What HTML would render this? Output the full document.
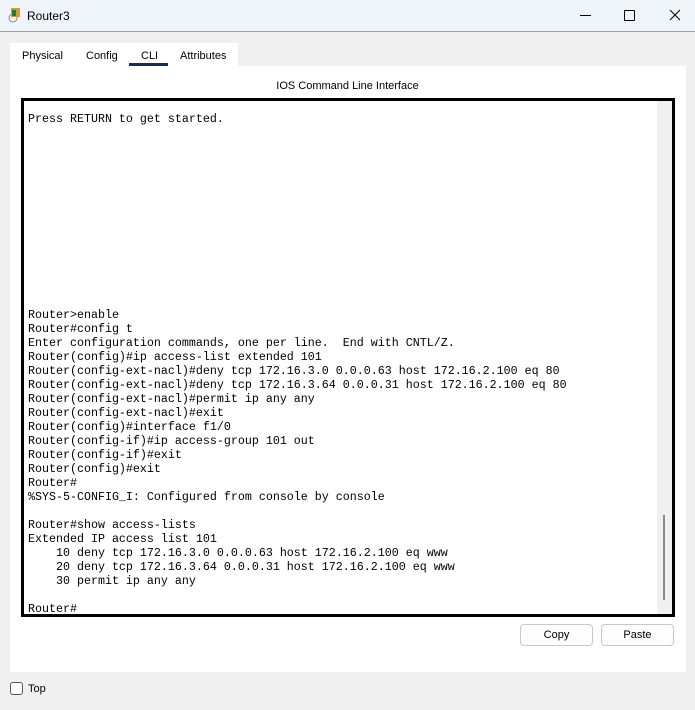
<!DOCTYPE html>
<html><head><style>
body{margin:0;width:695px;height:710px;background:#f0f0f0;font-family:"Liberation Sans",sans-serif;position:relative;overflow:hidden}
.tb{position:absolute;left:0;top:0;width:695px;height:31px;background:#eff4f9;border-bottom:1px solid #a0a0a0}
.tb .t{position:absolute;left:27px;top:9px;font-size:12px;color:#000}
.tabs{position:absolute;left:10px;top:43px;width:228px;height:23px;background:#fff}
.tab{position:absolute;top:6px;font-size:11px;color:#000}
.panel{position:absolute;left:10px;top:66px;width:676px;height:606px;background:#fff}
.hdr{position:absolute;left:0;width:695px;top:79px;text-align:center;font-size:11px}
.term{position:absolute;left:21px;top:98px;width:648px;height:513px;border:3px solid #000;background:#fff;overflow:hidden}
.sb{position:absolute;right:0;top:0;width:15px;height:100%;background:#f0f0f0}
.th{position:absolute;left:6px;top:414px;width:2px;height:85px;background:#8a8a8a}
pre{margin:0;position:absolute;left:4px;top:11px;font-family:"Liberation Mono",monospace;font-size:11.67px;line-height:14px;color:#000}
.btn{position:absolute;top:624px;width:71px;height:20px;border:1px solid #c8c8c8;border-radius:4px;background:#fdfdfd;font-size:11px;text-align:center;line-height:20px}
</style></head><body>
<div class="tb">
<svg style="position:absolute;left:6px;top:7px" width="16" height="16"><circle cx="7" cy="11" r="4" fill="none" stroke="#888"/><rect x="5" y="1" width="9" height="9" fill="#c8a040"/><rect x="6" y="3" width="4" height="6" fill="#2a7a2a"/></svg>
<span class="t">Router3</span>
<div style="position:absolute;left:580px;top:15px;width:11px;height:1px;background:#000"></div>
<div style="position:absolute;left:624px;top:10px;width:9px;height:9px;border:1px solid #000;border-radius:1px"></div>
<svg style="position:absolute;left:669px;top:9px" width="12" height="12"><path d="M1 1L11 11M11 1L1 11" stroke="#000" stroke-width="1"/></svg>
</div>
<div class="tabs">
<span class="tab" style="left:12px;top:7px">Physical</span>
<span class="tab" style="left:76px;top:7px">Config</span>
<span class="tab" style="left:131px;top:7px">CLI</span>
<div style="position:absolute;left:119px;top:20px;width:39px;height:3px;background:#1a2d4a"></div>
<span class="tab" style="left:170px;top:7px">Attributes</span>
</div>
<div class="panel"></div>
<div class="hdr" style="top:80px">IOS Command Line Interface</div>
<div class="term"><div class="sb"><div class="th"></div></div>
<pre>Press RETURN to get started.













Router&gt;enable
Router#config t
Enter configuration commands, one per line.  End with CNTL/Z.
Router(config)#ip access-list extended 101
Router(config-ext-nacl)#deny tcp 172.16.3.0 0.0.0.63 host 172.16.2.100 eq 80
Router(config-ext-nacl)#deny tcp 172.16.3.64 0.0.0.31 host 172.16.2.100 eq 80
Router(config-ext-nacl)#permit ip any any
Router(config-ext-nacl)#exit
Router(config)#interface f1/0
Router(config-if)#ip access-group 101 out
Router(config-if)#exit
Router(config)#exit
Router#
%SYS-5-CONFIG_I: Configured from console by console

Router#show access-lists
Extended IP access list 101
    10 deny tcp 172.16.3.0 0.0.0.63 host 172.16.2.100 eq www
    20 deny tcp 172.16.3.64 0.0.0.31 host 172.16.2.100 eq www
    30 permit ip any any

Router#</pre></div>
<div class="btn" style="left:520px">Copy</div>
<div class="btn" style="left:601px">Paste</div>
<div style="position:absolute;left:10px;top:682px;width:11px;height:11px;border:1px solid #555;border-radius:3px;background:#fff"></div>
<span style="position:absolute;left:28px;top:683px;font-size:11px">Top</span>
</body></html>
